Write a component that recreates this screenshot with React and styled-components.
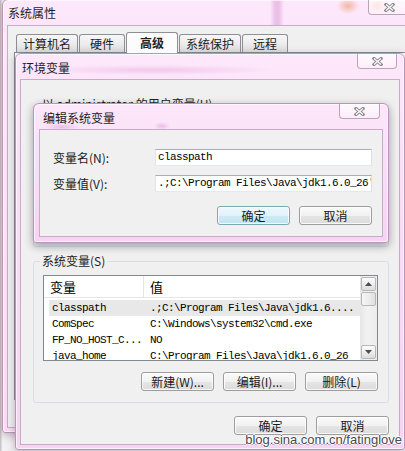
import styled, { createGlobalStyle } from 'styled-components';

const UI_FONT = `"Noto Sans CJK SC", "Liberation Sans", sans-serif`;
const MONO_FONT = `"Liberation Mono", "Noto Sans CJK SC", monospace`;

const GlobalStyle = createGlobalStyle`
  html, body {
    margin: 0;
    padding: 0;
  }
  body {
    font-family: ${UI_FONT};
    font-size: 12px;
    color: #000;
    background: #f2eff2;
  }
`;

const systemVars = [
  { name: 'classpath', value: '.;C:\\Program Files\\Java\\jdk1.6....', selected: true },
  { name: 'ComSpec', value: 'C:\\Windows\\system32\\cmd.exe' },
  { name: 'FP_NO_HOST_C...', value: 'NO' },
  { name: 'java_home', value: 'C:\\Program Files\\Java\\jdk1.6.0_26' },
];

const tabs = ['计算机名', '硬件', '高级', '系统保护', '远程'];

function CloseGlyph() {
  return (
    <svg width='11' height='9' viewBox='0 0 11 9'>
      <path d='M2 1.5 L9 7.5 M9 1.5 L2 7.5' stroke='#8d8d8d' strokeWidth='3.2' strokeLinecap='square' />
      <path d='M2 1.5 L9 7.5 M9 1.5 L2 7.5' stroke='#fafafa' strokeWidth='1.3' />
    </svg>
  );
}

function Arrow({ down }) {
  return (
    <svg width='7' height='4' viewBox='0 0 7 4'>
      <path d={down ? 'M0 0 H7 L3.5 4 Z' : 'M0 4 H7 L3.5 0 Z'} fill='#4d4d4d' />
    </svg>
  );
}

function App() {
  return (
    <Desktop>
      <GlobalStyle />

      <SystemWindow $x={2} $y={-1} $w={420} $h={434} $frame={4}>
        <TitleBar $h={25}>
          <Title $top={6} $left={1}>系统属性</Title>
          <CloseButton $w={42} $right={7}>
            <CloseGlyph />
          </CloseButton>
        </TitleBar>
        <Client $pad='6px 0 0 6px'>
          <TabRow>
            {tabs.map((t) => (
              <Tab key={t} $active={t === '高级'}>
                {t}
              </Tab>
            ))}
          </TabRow>
          <TabPanel />
        </Client>
      </SystemWindow>

      <EnvWindow $x={15} $y={53} $w={390} $h={397} $frame={4}>
        <TitleBar $h={25}>
          <Title $top={7} $left={2}>环境变量</Title>
          <CloseButton $w={40} $right={3}>
            <CloseGlyph />
          </CloseButton>
        </TitleBar>
        <Client $pad='17px 10px 0 12px'>
          <GroupBox $h={150}>
            <Legend>以 administrator 的用户变量(U)</Legend>
          </GroupBox>
          <GroupBox $h={149} $gap={7}>
            <Legend>系统变量(S)</Legend>
            <ListView>
              <ListMain>
                <ListHeader>
                  <HeaderCell $w={100} $sep>变量</HeaderCell>
                  <HeaderCell>值</HeaderCell>
                </ListHeader>
                <ListRows>
                  {systemVars.map((v) => (
                    <ListRow key={v.name} $selected={v.selected}>
                      <NameCell>{v.name}</NameCell>
                      <ValueCell>{v.value}</ValueCell>
                    </ListRow>
                  ))}
                </ListRows>
              </ListMain>
              <ScrollBar>
                <ScrollButton>
                  <Arrow />
                </ScrollButton>
                <ScrollThumb />
                <ScrollTrack />
                <ScrollButton>
                  <Arrow down />
                </ScrollButton>
              </ScrollBar>
            </ListView>
            <ButtonRow $top={11}>
              <Button>新建(W)...</Button>
              <Button>编辑(I)...</Button>
              <Button>删除(L)</Button>
            </ButtonRow>
          </GroupBox>
          <ButtonRow $top={13}>
            <Button>确定</Button>
            <Button>取消</Button>
          </ButtonRow>
        </Client>
      </EnvWindow>

      <EditWindow $x={33} $y={103} $w={356} $h={140} $frame={5}>
        <TitleBar $h={25}>
          <Title $top={7} $left={4}>编辑系统变量</Title>
          <CloseButton $w={41} $right={3}>
            <CloseGlyph />
          </CloseButton>
        </TitleBar>
        <Client $pad='19px 10px 0 13px'>
          <FieldRow>
            <FieldLabel>变量名(N):</FieldLabel>
            <TextBox>classpath</TextBox>
          </FieldRow>
          <FieldRow $top={9}>
            <FieldLabel>变量值(V):</FieldLabel>
            <TextBox>.;C:\Program Files\Java\jdk1.6.0_26'</TextBox>
          </FieldRow>
          <ButtonRow $top={14}>
            <Button $default>确定</Button>
            <Button>取消</Button>
          </ButtonRow>
        </Client>
      </EditWindow>

      <Watermark>blog.sina.com.cn/fatinglove</Watermark>
    </Desktop>
  );
}
export default App;

const Desktop = styled.div`
  position: relative;
  width: 405px;
  height: 451px;
  overflow: hidden;
  background: linear-gradient(90deg, #c9c6ca 0, #c9c6ca 1px, #f3f1f3 2px);
`;

const Window = styled.div`
  position: absolute;
  left: ${(p) => p.$x}px;
  top: ${(p) => p.$y}px;
  width: ${(p) => p.$w}px;
  height: ${(p) => p.$h}px;
  box-sizing: border-box;
  display: flex;
  flex-direction: column;
  padding: 0 ${(p) => p.$frame}px ${(p) => p.$frame}px;
  border: 1px solid #b996b8;
  border-radius: 6px 6px 3px 3px;
  background: linear-gradient(180deg, #fde7fa 0%, #f9ddf6 45%, #f5d5f2 100%);
  box-shadow: 0 2px 8px rgba(70, 45, 70, 0.35), inset 0 0 0 1px rgba(255, 255, 255, 0.65);
`;

const SystemWindow = styled(Window)`
  background:
    radial-gradient(ellipse 11px 8px at 345px 6px, rgba(236, 150, 105, 0.6), transparent),
    radial-gradient(ellipse 9px 8px at 374px 4px, rgba(240, 165, 110, 0.5), transparent),
    linear-gradient(90deg, transparent 267px, rgba(210, 135, 205, 0.4) 272px, rgba(210, 135, 205, 0.4) 276px, transparent 281px),
    linear-gradient(180deg, #fde7fa 0%, #f8dcf5 100%);
`;

const EnvWindow = styled(Window)`
  background:
    radial-gradient(ellipse 120px 5px at 140px 16px, rgba(215, 130, 205, 0.3), transparent),
    linear-gradient(180deg, #fde7fa 0%, #f8dcf5 45%, #f5d5f2 100%);
`;

const EditWindow = styled(Window)`
  background:
    radial-gradient(ellipse 18px 4px at 28px 23px, rgba(200, 120, 190, 0.35), transparent),
    radial-gradient(ellipse 8px 4px at 128px 22px, rgba(200, 120, 190, 0.35), transparent),
    linear-gradient(180deg, #fde7fa 0%, #f9def6 45%, #f5d5f2 100%);
  box-shadow: 0 3px 9px rgba(40, 30, 40, 0.4), inset 0 0 0 1px rgba(255, 255, 255, 0.65);
`;

const TitleBar = styled.div`
  flex: none;
  height: ${(p) => p.$h}px;
  display: flex;
  justify-content: space-between;
  align-items: flex-start;
`;

const Title = styled.span`
  padding: ${(p) => p.$top}px 0 0 ${(p) => p.$left}px;
  line-height: 14px;
  color: #1e1e1e;
  white-space: nowrap;
`;

const CloseButton = styled.div`
  width: ${(p) => p.$w}px;
  height: 15px;
  margin-right: ${(p) => p.$right}px;
  box-sizing: border-box;
  border: 1px solid #bba3ba;
  border-top: none;
  border-radius: 0 0 4px 4px;
  background: linear-gradient(180deg, rgba(255, 255, 255, 0.75), rgba(255, 255, 255, 0.3));
  display: flex;
  align-items: center;
  justify-content: center;
`;

const Client = styled.div`
  flex: 1;
  min-height: 0;
  display: flex;
  flex-direction: column;
  padding: ${(p) => p.$pad};
  background: #f0f0f0;
  border: 1px solid #c9aac8;
  overflow: hidden;
`;

const TabRow = styled.div`
  display: flex;
  align-items: flex-end;
  gap: 1px;
  height: 20px;
  padding-left: 2px;
`;

const Tab = styled.div`
  position: relative;
  z-index: ${(p) => (p.$active ? 1 : 0)};
  box-sizing: border-box;
  min-width: ${(p) => (p.$active ? 52 : 46)}px;
  height: ${(p) => (p.$active ? 21 : 18)}px;
  margin-bottom: ${(p) => (p.$active ? -1 : 0)}px;
  padding: 0 6px;
  border: 1px solid #8e8f94;
  border-bottom: none;
  border-radius: 3px 3px 0 0;
  background: ${(p) =>
    p.$active ? '#fcfcfc' : 'linear-gradient(180deg, #f7f7f7 0%, #ececec 50%, #dedede 100%)'};
  font-weight: ${(p) => (p.$active ? 700 : 400)};
  line-height: ${(p) => (p.$active ? 19 : 17)}px;
  text-align: center;
  white-space: nowrap;
  color: #222;
`;

const TabPanel = styled.div`
  height: 346px;
  margin-right: -20px;
  border: 1px solid #898c95;
  background: #fff;
`;

const GroupBox = styled.fieldset`
  box-sizing: border-box;
  height: ${(p) => p.$h}px;
  min-width: 0;
  margin: ${(p) => p.$gap || 0}px 0 0;
  padding: 7px 10px 12px 9px;
  border: 1px solid #d5dfe5;
  border-radius: 3px;
`;

const Legend = styled.legend`
  margin-left: -3px;
  padding: 0 2px;
  line-height: 14px;
  color: #222;
`;

const ListView = styled.div`
  display: flex;
  height: 86px;
  box-sizing: border-box;
  border: 1px solid #828790;
  background: #fff;
  overflow: hidden;
`;

const ListMain = styled.div`
  flex: 1;
  min-width: 0;
`;

const ListHeader = styled.div`
  display: flex;
  height: 22px;
  box-sizing: border-box;
  border-bottom: 1px solid #e5e5e5;
  font-size: 13px;
`;

const HeaderCell = styled.div`
  box-sizing: border-box;
  width: ${(p) => (p.$w ? `${p.$w}px` : 'auto')};
  flex: ${(p) => (p.$w ? 'none' : 1)};
  display: flex;
  align-items: center;
  padding-left: 6px;
  border-right: ${(p) => (p.$sep ? '1px solid #e5e5e5' : 'none')};
`;

const ListRows = styled.div`
  padding-top: 2px;
`;

const ListRow = styled.div`
  display: flex;
  align-items: center;
  height: 16px;
  margin-left: 5px;
  background: ${(p) => (p.$selected ? '#e8e8e8' : 'transparent')};
  font-family: ${MONO_FONT};
  font-size: 11px;
  letter-spacing: -0.6px;
  white-space: nowrap;
`;

const NameCell = styled.div`
  flex: none;
  box-sizing: border-box;
  width: 101px;
  padding-left: 3px;
  overflow: hidden;
`;

const ValueCell = styled.div`
  flex: 1;
  overflow: hidden;
`;

const ScrollBar = styled.div`
  flex: none;
  width: 17px;
  box-sizing: border-box;
  display: flex;
  flex-direction: column;
  padding: 1px;
  background: linear-gradient(90deg, #e6e6e6 0%, #f2f2f2 40%, #ececec 100%);
`;

const ScrollButton = styled.div`
  flex: none;
  height: 14px;
  box-sizing: border-box;
  border: 1px solid #b7b7b7;
  border-radius: 2px;
  background: linear-gradient(180deg, #fbfbfb 0%, #eeeeee 50%, #dcdcdc 100%);
  display: flex;
  align-items: center;
  justify-content: center;
`;

const ScrollThumb = styled(ScrollButton)`
  margin-top: 1px;
  background: linear-gradient(90deg, #f6f6f6 0%, #ececec 50%, #e0e0e0 100%);
`;

const ScrollTrack = styled.div`
  flex: 1;
`;

const ButtonRow = styled.div`
  display: flex;
  justify-content: flex-end;
  gap: 9px;
  margin-top: ${(p) => p.$top}px;
`;

const Button = styled.div`
  box-sizing: border-box;
  width: 73px;
  height: 19px;
  border: 1px solid ${(p) => (p.$default ? '#7ea7b5' : '#9d9d9d')};
  border-radius: 3px;
  background: ${(p) =>
    p.$default
      ? 'linear-gradient(180deg, #eef8fc 0%, #e1f3fa 50%, #cdebf6 51%, #bfe4f2 100%)'
      : 'linear-gradient(180deg, #fafafa 0%, #f1f1f1 50%, #e5e5e5 51%, #dcdcdc 100%)'};
  box-shadow: inset 0 0 0 1px rgba(255, 255, 255, 0.8);
  line-height: 17px;
  text-align: center;
  color: #1a1a1a;
  white-space: nowrap;
`;

const FieldRow = styled.div`
  display: flex;
  align-items: center;
  height: 17px;
  margin-top: ${(p) => p.$top || 0}px;
`;

const FieldLabel = styled.div`
  flex: none;
  width: 102px;
  color: #1a1a1a;
`;

const TextBox = styled.div`
  flex: 1;
  min-width: 0;
  height: 17px;
  box-sizing: border-box;
  padding: 0 2px;
  border: 1px solid;
  border-color: #abadb3 #dbdfe6 #e3e9ef #e2e3ea;
  background: #fff;
  font-family: ${MONO_FONT};
  font-size: 11px;
  letter-spacing: -0.6px;
  line-height: 15px;
  white-space: nowrap;
  overflow: hidden;
`;

const Watermark = styled.div`
  position: absolute;
  right: 3px;
  top: 432px;
  font-family: "Liberation Sans", Arial, sans-serif;
  font-size: 13px;
  line-height: 15px;
  color: #4a4a4a;
  text-shadow: 1px 0 0 #fff, -1px 0 0 #fff, 0 1px 0 #fff, 0 -1px 0 #fff;
`;
